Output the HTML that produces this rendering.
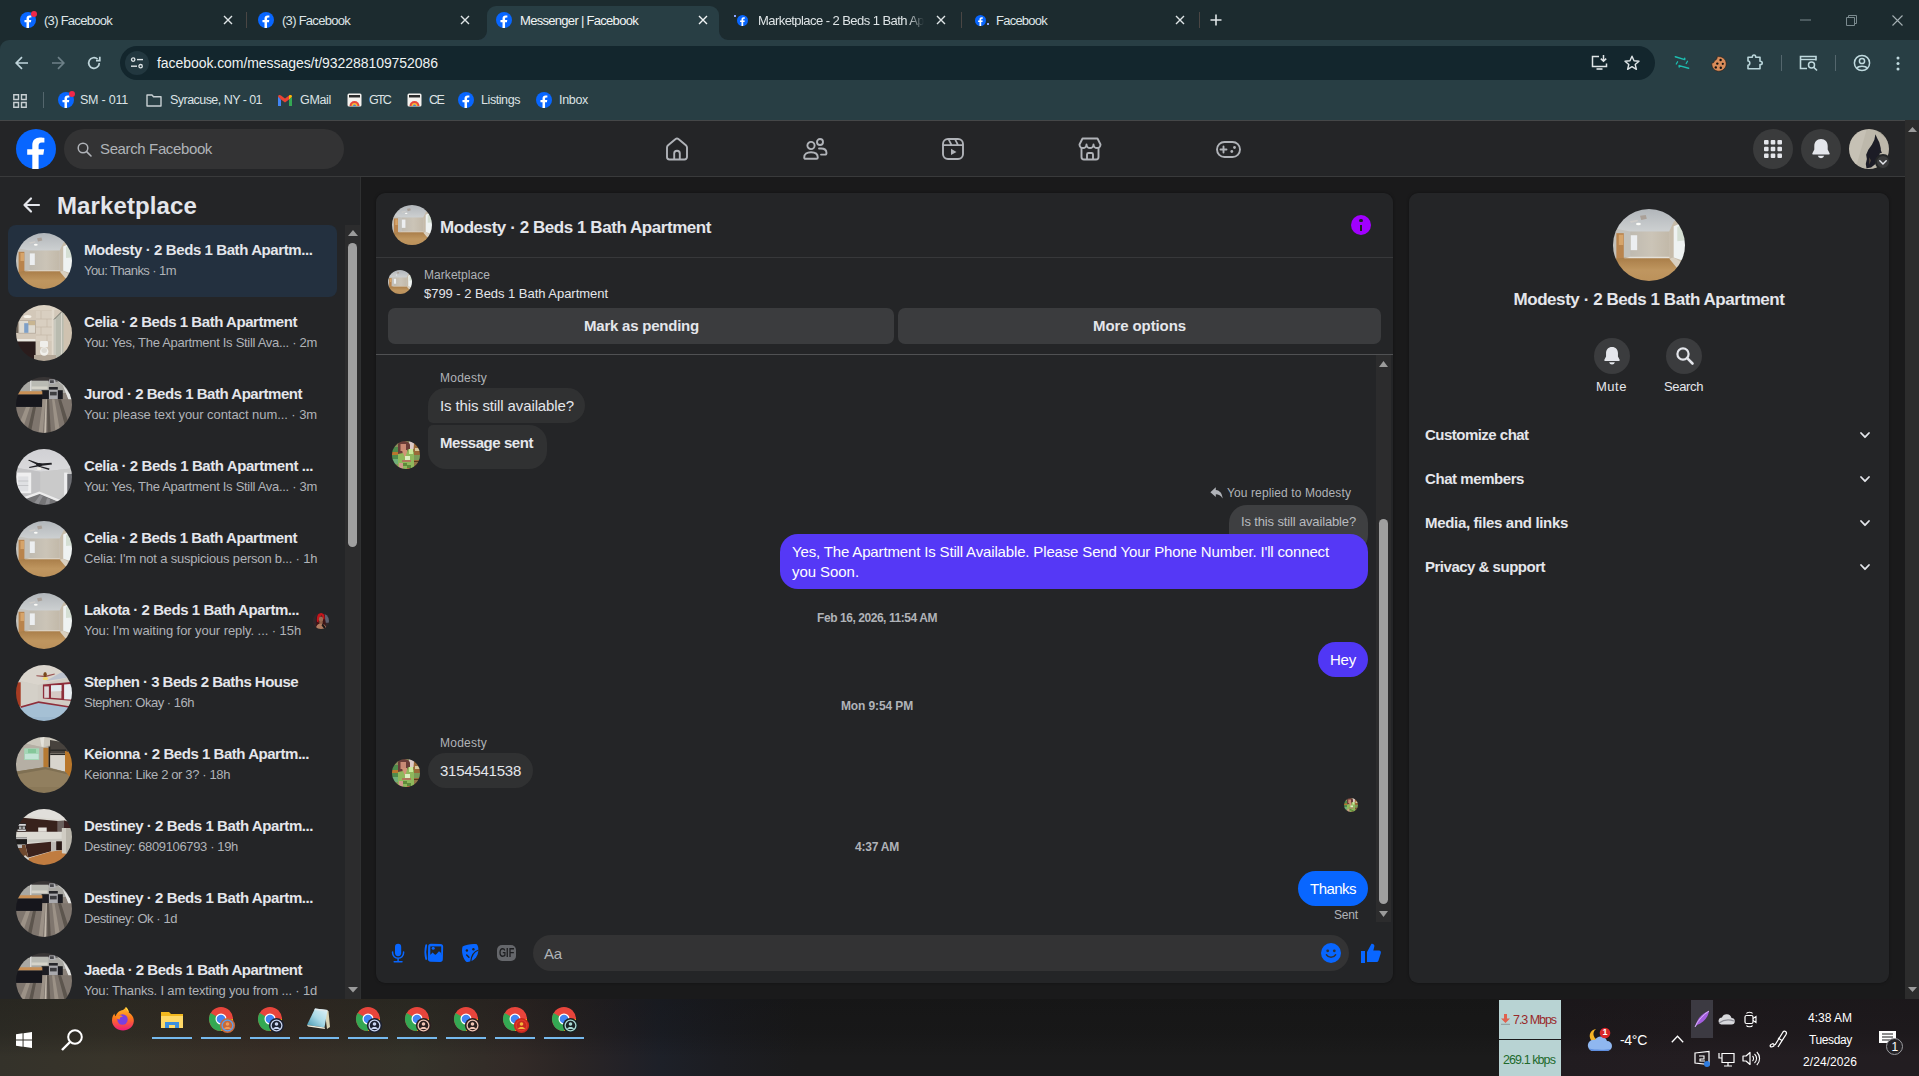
<!DOCTYPE html>
<html lang="en">
<head>
<meta charset="utf-8">
<title>Messenger | Facebook</title>
<style>
*{box-sizing:border-box;margin:0;padding:0}
html,body{width:1919px;height:1076px;overflow:hidden;background:#1a1a1b}
body{position:relative;font-family:"Liberation Sans",sans-serif;color:#e4e6eb;font-size:15px;-webkit-font-smoothing:antialiased}
.a{position:absolute}
.t{position:absolute;white-space:nowrap;line-height:1}
svg{display:block;position:absolute;overflow:visible}
/* ---------- browser chrome ---------- */
#tabstrip{left:0;top:0;width:1919px;height:52px;background:#1c2b2f}
#toolbar{left:0;top:40px;width:1919px;height:80px;background:#283e44;border-radius:9px 0 0 0}
#toolbar-line{left:0;top:120px;width:1919px;height:1px;background:#454748}
.tabtxt{font-size:13px;color:#dfe5e7;top:14px}
.tabx{width:10px;height:10px;top:15px}
.tabsep{width:1px;height:16px;top:12px;background:#4a4644}
#acttab{left:487px;top:6px;width:232px;height:34px;background:#283e44;border-radius:9px 9px 0 0}
#omni{left:120px;top:46px;width:1535px;height:34px;border-radius:17px;background:#13262d}
.bm{font-size:12.5px;color:#dde3e5;top:94px}
.fbfav{border-radius:50%;background:#0866ff}
/* ---------- facebook header ---------- */
#fbhead{left:0;top:121px;width:1905px;height:55px;background:#242527}
#fbhead-line{left:0;top:176px;width:1905px;height:1px;background:#393a3b}
#pgscroll{left:1905px;top:120px;width:14px;height:879px;background:#2c2c2c}
#search{left:64px;top:129px;width:280px;height:40px;border-radius:20px;background:#333334}
.rbtn{width:40px;height:40px;border-radius:50%;background:#3a3b3c;top:129px}
/* ---------- sidebar ---------- */
#side{left:0;top:177px;width:360px;height:822px;background:#242527}
#side-line{left:360px;top:177px;width:1px;height:822px;background:#2f3031}
#sel{left:8px;top:225px;width:329px;height:72px;border-radius:8px;background:#23303f}
#lscroll{left:345px;top:225px;width:15px;height:774px;background:#2c2c2d}
#lthumb{left:348px;top:243px;width:9px;height:304px;border-radius:5px;background:#9f9f9f}
.av{position:absolute;border-radius:50%;overflow:hidden}
.it{font-size:15px;font-weight:700;color:#e4e6eb;left:84px}
.is{font-size:13px;color:#b0b3b8;left:84px}
/* ---------- chat card ---------- */
.card{background:#242527;border-radius:9px;box-shadow:0 0 3px rgba(0,0,0,.35)}
#chat{left:376px;top:193px;width:1017px;height:790px}
#info{left:1409px;top:193px;width:480px;height:790px}
.hl{height:1px;background:#37383a}
.btn{background:#3b3c3e;border-radius:7px;height:36px;top:308px}
.btn .t{font-size:15px;font-weight:700;color:#e4e6eb;top:10px}
.bub{position:absolute;border-radius:18px;background:#303132}
.bt{font-size:15px;color:#e4e6eb}
.lbl{font-size:12px;color:#b0b3b8}
.ts{font-size:12px;font-weight:700;color:#b0b3b8}
#cscroll{left:1376px;top:355px;width:15px;height:567px;background:#2c2c2d}
#cthumb{left:1379px;top:519px;width:9px;height:385px;border-radius:5px;background:#9f9f9f}
.row{font-size:15px;font-weight:700;color:#e4e6eb;left:1425px}
/* ---------- taskbar ---------- */
#task{left:0;top:999px;width:1919px;height:77px;background:
 linear-gradient(180deg,rgba(10,10,10,.28) 0,rgba(10,10,10,.2) 45%,rgba(10,10,10,0) 75%),
 linear-gradient(90deg,#34322a 0px,#38342a 110px,#392f27 270px,#35332a 410px,#322a27 520px,#2c2625 560px,#222127 630px,#1d2028 660px,#1c1d22 720px,#1b1b1c 800px,#1b1b1b 1490px,#211c20 1565px,#231d21 1700px,#221d21 1919px)}
.ul{height:2px;width:40px;top:1037px;background:#76b9ed}
.clk{font-size:12px;color:#fff}
</style>
</head>
<body>
<!-- ======================= BROWSER CHROME ======================= -->
<svg width="0" height="0" style="left:-10px;top:-10px"><defs><symbol id="fbf" viewBox="0 0 40 40"><circle cx="20" cy="20" r="20" fill="#0866ff"/><path d="M22.600 40V25.800H27.300L28.200 20.300H22.600V16.700C22.600 15.100 23.400 13.600 25.800 13.600H28.400V8.900C28.400 8.900 26.100 8.500 23.900 8.500C19.300 8.500 16.300 11.300 16.300 16.100V20.300H11.200V25.800H16.300V40Z" fill="#fff"/></symbol></defs></svg>
<div class="a" id="tabstrip"></div>
<div class="a" id="toolbar"></div>
<div class="a" id="acttab"></div>
<svg style="left:478px;top:31px" width="9" height="9"><path d="M9 0V9H0A9 9 0 0 0 9 0Z" fill="#283d45"/></svg>
<svg style="left:719px;top:31px" width="9" height="9"><path d="M0 0V9H9A9 9 0 0 1 0 0Z" fill="#283d45"/></svg>

<!-- tab 1 -->
<svg style="left:20px;top:12px" width="16" height="16"><use href="#fbf"/></svg>
<div class="a" style="left:31px;top:11px;width:6px;height:6px;border-radius:50%;background:#f02849"></div>
<div class="t tabtxt" style="left:44px"><span style="letter-spacing:-0.716px">(3) Facebook</span></div>
<svg class="tabx" style="left:223px" viewBox="0 0 10 10"><path d="M1 1L9 9M9 1L1 9" stroke="#dfe5e7" stroke-width="1.4"/></svg>
<div class="a tabsep" style="left:246px"></div>
<!-- tab 2 -->
<svg style="left:258px;top:12px" width="16" height="16"><use href="#fbf"/></svg>
<div class="t tabtxt" style="left:282px"><span style="letter-spacing:-0.716px">(3) Facebook</span></div>
<svg class="tabx" style="left:460px" viewBox="0 0 10 10"><path d="M1 1L9 9M9 1L1 9" stroke="#dfe5e7" stroke-width="1.4"/></svg>
<!-- tab 3 active -->
<svg style="left:496px;top:12px" width="16" height="16"><use href="#fbf"/></svg>
<div class="t tabtxt" style="left:520px;color:#f1f4f5"><span style="letter-spacing:-0.700px">Messenger | Facebook</span></div>
<svg class="tabx" style="left:698px" viewBox="0 0 10 10"><path d="M1 1L9 9M9 1L1 9" stroke="#f1f4f5" stroke-width="1.4"/></svg>
<!-- tab 4 -->
<svg style="left:737px;top:15px" width="11" height="11"><use href="#fbf"/></svg>
<div class="a" style="left:734px;top:15px;width:2px;height:2px;background:#8fa7ff"></div>
<div class="t tabtxt" style="left:758px;width:166px;overflow:hidden;-webkit-mask-image:linear-gradient(90deg,#000 150px,transparent 166px)"><span style="letter-spacing:-0.561px">Marketplace - 2 Beds 1 Bath Ap</span></div>
<svg class="tabx" style="left:936px" viewBox="0 0 10 10"><path d="M1 1L9 9M9 1L1 9" stroke="#dfe5e7" stroke-width="1.4"/></svg>
<div class="a tabsep" style="left:961px"></div>
<!-- tab 5 -->
<svg style="left:975px;top:15px" width="11" height="11"><use href="#fbf"/></svg>
<div class="a" style="left:987px;top:23px;width:2px;height:2px;background:#8fa7ff"></div>
<div class="t tabtxt" style="left:996px"><span style="letter-spacing:-0.762px">Facebook</span></div>
<svg class="tabx" style="left:1175px" viewBox="0 0 10 10"><path d="M1 1L9 9M9 1L1 9" stroke="#dfe5e7" stroke-width="1.4"/></svg>
<div class="a tabsep" style="left:1199px"></div>
<svg style="left:1210px;top:14px" width="12" height="12" viewBox="0 0 12 12"><path d="M6 0.5V11.5M0.5 6H11.5" stroke="#dfe5e7" stroke-width="1.6"/></svg>
<!-- window controls -->
<svg style="left:1800px;top:19px" width="11" height="2"><path d="M0 1H11" stroke="#7b8a8f" stroke-width="1"/></svg>
<svg style="left:1846px;top:15px" width="11" height="11" viewBox="0 0 11 11"><path d="M0.5 2.5H8.5V10.5H0.5ZM2.5 2.5V0.5H10.5V8.5H8.5" stroke="#7b8a8f" fill="none" stroke-width="1"/></svg>
<svg style="left:1892px;top:15px" width="11" height="11" viewBox="0 0 11 11"><path d="M0.5 0.5L10.5 10.5M10.5 0.5L0.5 10.5" stroke="#a5b0b4" stroke-width="1.1"/></svg>

<!-- toolbar -->
<svg style="left:15px;top:56px" width="14" height="14" viewBox="0 0 14 14"><path d="M13 7H1.8M7 1.2L1.2 7L7 12.8" stroke="#bfd5db" stroke-width="1.7" fill="none"/></svg>
<svg style="left:51px;top:56px" width="14" height="14" viewBox="0 0 14 14"><path d="M1 7H12.2M7 1.2L12.8 7L7 12.8" stroke="#6d8088" stroke-width="1.7" fill="none"/></svg>
<svg style="left:87px;top:56px" width="14" height="14" viewBox="0 0 14 14"><path d="M12.3 7A5.3 5.3 0 1 1 10.6 3.1" stroke="#bfd5db" stroke-width="1.7" fill="none"/><path d="M12.8 0.8V4.6H9" stroke="#bfd5db" stroke-width="1.7" fill="none"/></svg>
<div class="a" id="omni"></div>
<div class="a" style="left:125px;top:51px;width:24px;height:24px;border-radius:50%;background:#22373f"></div>
<svg style="left:130px;top:57px" width="14" height="12" viewBox="0 0 14 12"><circle cx="3.2" cy="2.6" r="1.7" stroke="#dfe5e7" stroke-width="1.3" fill="none"/><path d="M7 2.6H13" stroke="#dfe5e7" stroke-width="1.4"/><circle cx="10.6" cy="9.2" r="1.7" stroke="#dfe5e7" stroke-width="1.3" fill="none"/><path d="M1 9.2H7" stroke="#dfe5e7" stroke-width="1.4"/></svg>
<div class="t" style="left:157px;top:55.500px;font-size:14px;color:#eef2f3"><span style="letter-spacing:-0.060px">facebook.com/messages/t/932288109752086</span></div>
<!-- omnibox right icons -->
<svg style="left:1591px;top:55px" width="17" height="15" viewBox="0 0 17 15"><path d="M8 1.5H1.5V11.5H15.5V8.5" stroke="#dfe5e7" stroke-width="1.5" fill="none"/><path d="M5.5 14H11.5" stroke="#dfe5e7" stroke-width="1.6"/><path d="M12.5 0V6M9.8 3.6L12.5 6.3L15.2 3.6" stroke="#dfe5e7" stroke-width="1.5" fill="none"/></svg>
<svg style="left:1624px;top:55px" width="16" height="15" viewBox="0 0 16 15"><path d="M8 1.2L10 5.8L15 6.2L11.2 9.5L12.4 14.3L8 11.7L3.6 14.3L4.8 9.5L1 6.2L6 5.8Z" stroke="#dfe5e7" stroke-width="1.4" fill="none" stroke-linejoin="round"/></svg>
<svg style="left:1674px;top:55px" width="16" height="15" viewBox="0 0 16 15"><path d="M1.300 1.800L10.700 4.600V3.300M5.200 12V10.600L14.600 13.200" stroke="#1dbdb0" stroke-width="1.500" fill="none" stroke-linecap="round" stroke-linejoin="round"/><path d="M2.300 9L3.600 6.700M12.200 8.500L13.500 6.200" stroke="#1dbdb0" stroke-width="1.300" stroke-linecap="round"/></svg>
<svg style="left:1710.500px;top:55.500px" width="16" height="16" viewBox="0 0 16 16"><path d="M6.200 0.800C10.500 -0.300 15.200 3 15.200 7.800C15.200 12 11.800 15.200 7.800 15.200C3.500 15.200 0.500 11.800 0.800 7C2.600 7.200 3.600 6 3.300 4.500C5 4.400 6.200 3 6.200 0.800Z" fill="#d98c5a" stroke="#2a1a10" stroke-width=".6"/><circle cx="9.600" cy="4" r="1.200" fill="#111"/><circle cx="6.300" cy="7.600" r="1.200" fill="#111"/><circle cx="11.800" cy="7.800" r="1.100" fill="#111"/><circle cx="4.800" cy="11.400" r="1.200" fill="#111"/><circle cx="9.800" cy="11.800" r="1.200" fill="#111"/></svg>
<svg style="left:1746px;top:53px" width="18" height="18" viewBox="0 0 18 18"><path d="M2 4.300H6.300C6.300 1.300 9.700 1.300 9.700 4.300H14V8.200C17 8.200 17 11.600 14 11.600V15.700H2V12.200C4.400 12.200 4.400 8 2 8Z" stroke="#b9d5da" stroke-width="1.600" fill="none" stroke-linejoin="round"/></svg>
<div class="a" style="left:1781px;top:55px;width:1px;height:16px;background:#54666d"></div>
<svg style="left:1799px;top:55px" width="19" height="16" viewBox="0 0 19 16"><path d="M17 5.5V1.5H1.5V13.500H8" stroke="#bfd9de" stroke-width="1.6" fill="none"/><path d="M1.5 4.5H17" stroke="#bfd9de" stroke-width="1.4"/><circle cx="12.5" cy="10" r="3" stroke="#bfd9de" stroke-width="1.5" fill="none"/><path d="M14.7 12.2L18 15.500" stroke="#bfd9de" stroke-width="1.6"/></svg>
<div class="a" style="left:1835px;top:55px;width:1px;height:16px;background:#54666d"></div>
<svg style="left:1853px;top:54px" width="18" height="18" viewBox="0 0 18 18"><circle cx="9" cy="9" r="7.6" stroke="#bfd9de" stroke-width="1.5" fill="none"/><circle cx="9" cy="7" r="2.6" stroke="#bfd9de" stroke-width="1.5" fill="none"/><path d="M3.8 14.2C5.5 11.500 12.500 11.500 14.200 14.200" stroke="#bfd9de" stroke-width="1.5" fill="none"/></svg>
<svg style="left:1896px;top:56px" width="4" height="15" viewBox="0 0 4 15"><circle cx="2" cy="2" r="1.5" fill="#bfd9de"/><circle cx="2" cy="7.500" r="1.5" fill="#bfd9de"/><circle cx="2" cy="13" r="1.5" fill="#bfd9de"/></svg>

<!-- bookmarks -->
<svg style="left:13px;top:94px" width="14" height="14" viewBox="0 0 14 14"><path d="M0.800 0.800H5.500V5.500H0.800ZM8.500 0.800H13.200V5.500H8.500ZM0.800 8.500H5.500V13.200H0.800ZM8.500 8.500H13.200V13.200H8.500Z" stroke="#c8d0d3" stroke-width="1.4" fill="none"/></svg>
<div class="a" style="left:43px;top:92px;width:1px;height:16px;background:#54666d"></div>
<svg style="left:58px;top:92px" width="16" height="16"><use href="#fbf"/></svg>
<div class="a" style="left:69px;top:91px;width:6px;height:6px;border-radius:50%;background:#f02849"></div>
<div class="t bm" style="left:80px"><span style="letter-spacing:-0.225px">SM - 011</span></div>
<svg style="left:146px;top:94px" width="16" height="13" viewBox="0 0 16 13"><path d="M1 1H6L7.500 2.800H15V12H1Z" stroke="#c8d0d3" stroke-width="1.4" fill="none" stroke-linejoin="round"/></svg>
<div class="t bm" style="left:170px"><span style="letter-spacing:-0.541px">Syracuse, NY - 01</span></div>
<svg style="left:278px;top:95px" width="14" height="11" viewBox="0 0 14 11"><path d="M0 1.500V11H3V4.500Z" fill="#4285f4"/><path d="M14 1.500V11H11V4.500Z" fill="#34a853"/><path d="M0 1.500C0 0 1.800 -0.500 3 0.500L7 3.600L11 0.500C12.200 -0.500 14 0 14 1.500L11 4.500L7 7.500L3 4.500Z" fill="#ea4335"/><path d="M11 0.500C12.200 -0.500 14 0 14 1.500L11 4.500Z" fill="#fbbc04"/></svg>
<div class="t bm" style="left:300px"><span style="letter-spacing:-0.331px">GMail</span></div>
<svg style="left:347px;top:93px" width="15" height="14" viewBox="0 0 15 14"><rect x="0.500" y="0.500" width="14" height="13" rx="1.500" fill="#f3f1ee"/><path d="M2 2H13V4.500H2Z" fill="#2a2a2a"/><path d="M2.500 13A5 5 0 0 1 12.500 13Z" fill="#e8453c"/><path d="M4.500 13A3 3 0 0 1 10.500 13Z" fill="#f6b83c"/><path d="M6 13A1.500 1.500 0 0 1 9 13Z" fill="#3f7fe0"/></svg>
<div class="t bm" style="left:369px"><span style="letter-spacing:-1.797px">GTC</span></div>
<svg style="left:407px;top:93px" width="15" height="14" viewBox="0 0 15 14"><rect x="0.500" y="0.500" width="14" height="13" rx="1.500" fill="#f3f1ee"/><path d="M2 2H13V4.500H2Z" fill="#2a2a2a"/><path d="M2.500 13A5 5 0 0 1 12.500 13Z" fill="#e8453c"/><path d="M4.500 13A3 3 0 0 1 10.500 13Z" fill="#f6b83c"/><path d="M6 13A1.500 1.500 0 0 1 9 13Z" fill="#3f7fe0"/></svg>
<div class="t bm" style="left:429px"><span style="letter-spacing:-1.438px">CE</span></div>
<svg style="left:458px;top:92px" width="16" height="16"><use href="#fbf"/></svg>
<div class="t bm" style="left:481px"><span style="letter-spacing:-0.424px">Listings</span></div>
<svg style="left:536px;top:92px" width="16" height="16"><use href="#fbf"/></svg>
<div class="t bm" style="left:559px"><span style="letter-spacing:-0.319px">Inbox</span></div>
<div class="a" id="toolbar-line"></div>
<!-- ======================= SVG SYMBOLS (photos) ======================= -->
<svg width="0" height="0" style="left:-10px;top:-10px">
<defs>
<clipPath id="cc"><circle cx="28" cy="28" r="28"/></clipPath>
<linearGradient id="gceil" x1="0" y1="0" x2="0" y2="1"><stop offset="0" stop-color="#abb0b5"/><stop offset="1" stop-color="#cdd0d1"/></linearGradient>
<linearGradient id="gwall" x1="0" y1="0" x2="1" y2="0"><stop offset="0" stop-color="#bfbab0"/><stop offset=".55" stop-color="#cbc4b7"/><stop offset="1" stop-color="#c2b9a9"/></linearGradient>
<linearGradient id="gfloor" x1="0" y1="0" x2="0" y2="1"><stop offset="0" stop-color="#a87c48"/><stop offset=".45" stop-color="#bf965f"/><stop offset="1" stop-color="#ba8f59"/></linearGradient>
<linearGradient id="gceil2" x1="0" y1="0" x2="0" y2="1"><stop offset="0" stop-color="#cfcfd3"/><stop offset="1" stop-color="#dadadc"/></linearGradient>
<filter id="bl2"><feGaussianBlur stdDeviation="2"/></filter>
<filter id="bl"><feGaussianBlur stdDeviation="0.55"/></filter>
<symbol id="room" viewBox="0 0 56 56"><g clip-path="url(#cc)"><g filter="url(#bl)">
 <rect x="-4" y="-4" width="64" height="64" fill="#c9ccce"/>
 <path d="M-4 -4H60V10L47.500 9.400L43.700 17.500H13.300L-4 15Z" fill="url(#gceil)"/>
 <path d="M-4 14L13.300 17.500V37.500L-4 40Z" fill="#c3c1bb"/>
 <rect x="13.300" y="17.500" width="30.400" height="20.500" fill="url(#gwall)"/>
 <path d="M43.700 17.500L47.500 9.400L60 4V52L43.700 38.500Z" fill="#c6bba9"/>
 <path d="M47.200 13.500L60 8V42L47.200 37.800Z" fill="#eef2f1"/>
 <path d="M50 14L60 10V24L50 25Z" fill="#d5dfd3"/>
 <path d="M2.600 18.800H8.400V38.800H2.600Z" fill="#b9844d"/>
 <path d="M4.500 20H8V28H4.500Z" fill="#d6a46a"/>
 <rect x="13.800" y="20.400" width="5" height="11.600" fill="#eceef0"/>
 <path d="M-4 40L2.300 38.500L13.300 37.500H43.700L60 52V60H-4Z" fill="url(#gfloor)"/>
 <path d="M8.400 38.300L13.300 37.200H43.700L44.500 38.300H13.300Z" fill="#e4e0d8"/>
 <path d="M43.700 38.500L49.500 45.600L56 43L47.200 37.800Z" fill="#d9d0c0"/>
 <path d="M21 5.200L25.500 4.600L26.300 7.500L22 8.600Z" fill="#aaa098"/>
 <path d="M13 9.500L19 8.300L19.500 9.500L14 10.800Z" fill="#cfcdca"/>
 <ellipse cx="19.800" cy="11.700" rx="1.900" ry="1" fill="#fbfbf8"/>
</g></g></symbol>
<symbol id="bath" viewBox="0 0 56 56"><g clip-path="url(#cc)"><g filter="url(#bl)">
 <rect x="-4" y="-4" width="64" height="64" fill="#d3c8b9"/>
 <rect x="-4" y="-4" width="64" height="9" fill="#dcd2c3"/>
 <rect x="20" y="6" width="16" height="30" fill="#d9cfc1"/>
 <path d="M20 14H36M20 22H36M20 30H36M25 6V14M31 14V22M25 22V30M31 30V38" stroke="#c3b7a6" stroke-width=".6"/>
 <ellipse cx="11.500" cy="11.500" rx="4" ry="1.600" fill="#f7f3ea"/>
 <rect x="2.300" y="15.200" width="17.500" height="13.400" fill="#b5ab9d"/>
 <rect x="3.200" y="16" width="15.800" height="11.800" fill="#dedad1"/>
 <rect x="12" y="16" width="7" height="4.200" fill="#c8b591"/>
 <rect x="8.200" y="18.200" width="4.200" height="9.600" fill="#7d9fc7"/>
 <rect x="0" y="16" width="2.300" height="12" fill="#6d6359"/>
 <rect x="35.800" y="3" width="2.400" height="50" fill="#e1d9cc"/>
 <path d="M37.700 14L45 6.800H47.800V52H37.700Z" fill="#b9bbaf"/>
 <path d="M45.500 7V52M39 14V52" stroke="#dcd9cf" stroke-width=".9" fill="none"/>
 <path d="M38 14.500L45.500 7" stroke="#5d5a52" stroke-width=".7" fill="none"/>
 <rect x="47.800" y="4" width="10" height="50" fill="#cfc2b0"/>
 <rect x="-2" y="34" width="21.400" height="2.400" fill="#ece8e1"/>
 <path d="M-2 36.400H19.600V53L12 58H-2Z" fill="#2a1f1f"/>
 <path d="M18 50H40V60H18Z" fill="#b3a798"/>
 <rect x="24" y="36" width="8" height="6.300" rx="1" fill="#efeeea"/>
 <ellipse cx="28.200" cy="46.500" rx="4.200" ry="4.300" fill="#f1f0ec"/>
 <ellipse cx="28.200" cy="45.500" rx="2.800" ry="2.400" fill="#dddad3"/>
</g></g></symbol>
<symbol id="kit" viewBox="0 0 56 56"><g clip-path="url(#cc)"><g filter="url(#bl)">
 <rect x="-4" y="-4" width="64" height="64" fill="#8b827a"/>
 <rect x="-4" y="-4" width="64" height="20" fill="#a9a8a3"/>
 <path d="M12 -4H44V4.500H12Z" fill="#373435"/>
 <rect x="14.900" y="3.700" width="17.700" height="9" fill="#b9bab3"/>
 <rect x="15.500" y="9.500" width="16" height="2.600" fill="#d5d3c9"/>
 <rect x="14" y="2" width="1.400" height="12" fill="#d9d9d7"/>
 <rect x="33.200" y="2.400" width="6.300" height="4.400" fill="#b4b4b8"/>
 <rect x="34" y="3.200" width="3.800" height="2.800" fill="#4a4a4e"/>
 <path d="M40 3L47.100 8.700L56 31.500V3Z" fill="#c9c9c6"/>
 <path d="M47.100 8.700L52 21L56 31.500L56 20Z" fill="#e4e4e2"/>
 <rect x="25.600" y="13.200" width="21.200" height="9.100" fill="#1c1d20"/>
 <rect x="32.900" y="10" width="8.900" height="12.300" fill="#a9a9ad"/>
 <rect x="32.900" y="10" width="8.900" height="2.600" fill="#26262a"/>
 <rect x="34" y="14.800" width="6.700" height="3.600" fill="#3c3c40"/>
 <path d="M-4 22.300H60V60H-4Z" fill="#7f766e"/>
 <path d="M27 22.300L22 60H26.500L29.500 22.300ZM36 22.300L40 60H45L38.500 22.300ZM10 30L-2 60H4L14 30Z" fill="#9c9287"/>
 <path d="M31 22.300L31.500 60H35L33 22.300ZM42 22.300L52 60H57L45 22.300ZM17 30L10 60H14L20 30Z" fill="#5c544e"/>
 <path d="M29.700 22.300L28 60H30L30.800 22.300Z" fill="#c1b8ab"/>
 <path d="M2.200 14.300H26.300V17.500H1.500Z" fill="#c98f55"/>
 <path d="M-4 17.500H26V29.900H-4Z" fill="#15161a"/>
</g></g></symbol>
<symbol id="grey" viewBox="0 0 56 56"><g clip-path="url(#cc)"><g filter="url(#bl)">
 <rect x="-4" y="-4" width="64" height="64" fill="#c6c6c8"/>
 <path d="M-4 -4H60V19.500L54.700 19.500L24.400 22.700L0.300 18.900L-4 18Z" fill="url(#gceil2)"/>
 <path d="M-4 18L24.400 22.700V44L-4 52Z" fill="#c2c2c4"/>
 <path d="M24.400 22.700L60 19V54L24.400 44Z" fill="#cacaca"/>
 <rect x="1" y="23.600" width="14.200" height="20.600" fill="#efeff0"/>
 <rect x="2.200" y="27.400" width="10.100" height="14.900" fill="#dfe0e3"/>
 <path d="M2.200 32H12.300M2.200 36.500H12.300" stroke="#c4c5c8" stroke-width="1"/>
 <rect x="48.100" y="23.600" width="3.400" height="25" fill="#ededee"/>
 <rect x="51.300" y="25" width="6" height="24" fill="#6d6e73"/>
 <path d="M6 50.500L23.700 44.200L42 52.500L40 60H4Z" fill="#747477"/>
 <path d="M14 60L24 46L27 47L20 60ZM28 60L31 49L34 50L33 60Z" fill="#8f8f92"/>
 <path d="M4.500 49.200L23.400 42.600L44 50.800L43 53L23.600 45L5.500 51.500Z" fill="#ececec"/>
 <path d="M12 11.300L13 10.700L23.500 14.500L35.500 13.800L36 15.500L24 17L33.500 19.500L33 21L22 17.500L13.500 19L13 18L21.500 16Z" fill="#222225"/>
 <ellipse cx="23.100" cy="15.600" rx="3" ry="1.600" fill="#1e1e21"/>
 <ellipse cx="23.100" cy="19.800" rx="2.200" ry="1.200" fill="#f4f1e6"/>
</g></g></symbol>
<symbol id="blue" viewBox="0 0 56 56"><g clip-path="url(#cc)"><g filter="url(#bl)">
 <rect x="-4" y="-4" width="64" height="64" fill="#d1ccc4"/>
 <path d="M-4 -4H60V12L52.800 12.500L21.800 20.100L2.800 15.700L-4 15Z" fill="#dad5cd"/>
 <path d="M30 16L52.800 12.500L60 12V4L44 8Z" fill="#bcc2cd"/>
 <path d="M2.800 15.700L21.800 20.100V37L2.800 43Z" fill="#d4d0c8"/>
 <rect x="-2" y="17.300" width="6.700" height="24.300" fill="#a63a20"/>
 <path d="M26.900 19.500L60 16.500V36.200L26.900 33.400Z" fill="#8e2f3a"/>
 <rect x="28.200" y="21.400" width="4.700" height="11.400" fill="#dcd6d7"/>
 <path d="M35 20.600L45.400 20V33.400L35 32.800Z" fill="#d6cac5"/>
 <path d="M35 20.600L45.400 20V26L35 26.500Z" fill="#e3ecef"/>
 <path d="M48.100 19.400L60 18.500V35L48.100 34.200Z" fill="#e8edf1"/>
 <path d="M-4 46L4.700 42.600L22.500 37.600L53.500 42.600L60 44V60H-4Z" fill="#a5c0d4"/>
 <path d="M-4 52H60V60H-4Z" fill="#9db9cf"/>
 <path d="M4.700 41.300L22.500 36.300L53.500 41.300L58 42.200V43.600L53.500 42.800L22.500 37.900L4.700 43Z" fill="#8e2f3a"/>
 <path d="M20.300 10.200L29 10.800L38.600 8.600L38.800 9.600L29.200 12.200L20.500 11.300Z" fill="#9a5452"/>
 <ellipse cx="29.100" cy="9.600" rx="1.700" ry="2.600" fill="#7a4a1e"/>
 <ellipse cx="29.400" cy="13.500" rx="2.800" ry="1.600" fill="#f2da6c"/>
</g></g></symbol>
<symbol id="carpet" viewBox="0 0 56 56"><g clip-path="url(#cc)"><g filter="url(#bl)">
 <rect x="-4" y="-4" width="64" height="64" fill="#b6b0a5"/>
 <path d="M-4 -4H60V4L42 4.900L27.500 10.600L10.400 6.800L-4 8Z" fill="#ccc8bd"/>
 <path d="M23.500 -2H28.500L27.500 10L25.500 9.500Z" fill="#e4e2da"/>
 <path d="M-4 8L10.400 6.800L27.500 10.600V31L-4 35.500Z" fill="#b5afa4"/>
 <rect x="8.200" y="11.300" width="14.900" height="11.700" fill="#a4d6b6"/>
 <path d="M9 17H22.500V22H9Z" fill="#c3e4d6"/>
 <path d="M12 12H20V16H12Z" fill="#84c79a"/>
 <path d="M34 3L52 6V16H34Z" fill="#46423c"/>
 <rect x="27.400" y="10.800" width="5.300" height="19.600" fill="#b67a33"/>
 <rect x="32.600" y="9.500" width="1.700" height="21" fill="#26221f"/>
 <path d="M34.300 18.200H50V35L34.300 30.500Z" fill="#d8d5cd"/>
 <path d="M34.300 12.500H50V14H34.300ZM34.300 16.500H50V18H34.300Z" fill="#2c2925"/>
 <path d="M49 13.800L60 18V46L49 38.500Z" fill="#b9772c"/>
 <path d="M-4 35.500L0.300 34.400L29.400 29.900L49 34.700L60 46V60H-4Z" fill="#917f5f"/>
 <path d="M-4 35.500L0.300 34.400L29.400 29.900L49 34.700L52 37.500L29.400 32.200L-4 38.500Z" fill="#7f6f53"/>
 <path d="M-4 50H60V60H-4Z" fill="#8a7859"/>
</g></g></symbol>
<symbol id="dark" viewBox="0 0 56 56"><g clip-path="url(#cc)"><g filter="url(#bl)">
 <rect x="-4" y="-4" width="64" height="64" fill="#dcdad3"/>
 <path d="M-4 -4H60V12L49.700 11.300L9.800 6.800L-4 9Z" fill="#e1dfdb"/>
 <path d="M-2 12L6.600 8.700L41.800 12V22.700H-2Z" fill="#38221f"/>
 <rect x="22.200" y="18.500" width="8.500" height="4.300" fill="#e3e0da"/>
 <rect x="1" y="14.100" width="9.100" height="8.200" fill="#2c2826"/>
 <path d="M1.500 15H9.800V16.800H1.500ZM1.500 20.500H9.800V22H1.500Z" fill="#d8d9db"/>
 <path d="M3 17.500H5.500V20H3ZM6.500 17.500H9V20H6.500Z" fill="#a9abad"/>
 <path d="M41.800 12L48 11.500V22.700H41.800Z" fill="#6b5f5c"/>
 <path d="M48 11.300L56 14V20H48Z" fill="#3a2320"/>
 <path d="M45.900 18.900H60V46L45.900 44.200Z" fill="#b9b5ab"/>
 <path d="M45.900 18.900H50V44.500L45.900 44.200Z" fill="#d0ccc3"/>
 <rect x="-2" y="28.500" width="13" height="7" fill="#1f1c1c"/>
 <rect x="0" y="28.500" width="11" height="1.600" fill="#b9b9b9"/>
 <path d="M11 30.600L45.900 29.800V32.300L11 33.600Z" fill="#c9c8c1"/>
 <path d="M9.200 35.300L35.100 32.800V42.300L12.300 48.600Z" fill="#3b231f"/>
 <rect x="35.100" y="33.100" width="5.100" height="9" fill="#bdbab4"/>
 <rect x="40.200" y="32.300" width="5.700" height="9" fill="#2a1a18"/>
 <path d="M-2 36H9.200L12.300 48.600L8 52H-2Z" fill="#6f4a2e"/>
 <path d="M-2 36H6V39H-2Z" fill="#b9b9bb"/>
 <path d="M12.300 49.200L35.100 42.600L45.900 41.300V44.200L60 46V60H4Z" fill="#c07c40"/>
 <path d="M9 46L13 49.500L10 56L5 52Z" fill="#d9d6cf"/>
</g></g></symbol>
<symbol id="person" viewBox="0 0 56 56"><g clip-path="url(#cc)"><g filter="url(#bl)">
 <rect x="-4" y="-4" width="64" height="64" fill="#8a8f5c"/>
 <path d="M-4 12H14V46H-4Z" fill="#4f8a4c"/>
 <path d="M0 22H12V28H0Z" fill="#b9772e"/>
 <path d="M-2 36H14V46H-2Z" fill="#6fae78"/>
 <path d="M34 -4H48V16H34Z" fill="#dccbc6"/>
 <path d="M44 4H60V60H40Z" fill="#9a6a38"/>
 <path d="M46 14H56V20H46Z" fill="#d9c79a"/>
 <path d="M44 28H58V38H44Z" fill="#7a9a58"/>
 <path d="M42 40H56V56H42Z" fill="#5a3a1e"/>
 <path d="M44 42H54V54H44Z" fill="#b89a62" opacity=".6"/>
 <path d="M12 6C14 -2 34 -2 36 8V26H12Z" fill="#6a3d37"/>
 <path d="M17 6H28V20H17Z" fill="#c98a74"/>
 <path d="M20 18H30V34L24 36Z" fill="#d09478"/>
 <path d="M12 26L22 24L26 34L32 16L44 22V60H12Z" fill="#8fb85c"/>
 <path d="M26 30H36V38H26Z" fill="#dcefc0"/>
 <path d="M34 16H42V26H34Z" fill="#c9e89a"/>
 <path d="M20 38H38V42H20Z" fill="#b0785c"/>
 <path d="M14 44H22V58H14Z" fill="#d09a8a"/>
 <path d="M22 44H30V50H22ZM30 48H38V56H30Z" fill="#5f8a3a"/>
 <path d="M30 54H36V60H30Z" fill="#c9784a"/>
</g></g></symbol>
<symbol id="dog" viewBox="0 0 56 56"><g clip-path="url(#cc)"><g filter="url(#bl)">
 <rect x="-4" y="-4" width="64" height="64" fill="#bdb8ab"/>
 <path d="M-4 -4H26L8 60H-4Z" fill="#c6c1b5"/>
 <path d="M30 -4H60V20Z" fill="#b2ad9f"/>
 <path d="M37 7.500L39.500 13L42.500 19L44.500 27L43 35L41 42L37 49L31 54L24.500 55L23.500 49L25 42L24 36L27 29L32 22L35.500 15Z" fill="#1d1f27"/>
 <path d="M43.500 27L46 33.500L43 34Z" fill="#1d1f27"/>
 <path d="M28 40L31 44L28 50Z" fill="#4a4038"/>
</g></g></symbol>
<symbol id="red" viewBox="0 0 56 56"><g clip-path="url(#cc)"><g filter="url(#bl2)">
 <rect x="-4" y="-4" width="64" height="64" fill="#33262a"/>
 <path d="M40 4H60V34H44Z" fill="#5f6070"/>
 <path d="M12 34C10 14 16 0 28 0S44 10 42 22C44 34 46 44 40 50H14C8 46 12 40 12 34Z" fill="#3f1216"/>
 <path d="M14 30C12 12 18 0 28 0S42 8 40 22C36 26 34 14 30 8C24 12 20 22 19 34Z" fill="#c4141c"/>
 <ellipse cx="28" cy="22" rx="7.500" ry="10" fill="#9b6a52"/>
 <path d="M22 30H34V40H22Z" fill="#8c5e48"/>
 <path d="M10 56C10 42 20 36 28 38C36 36 48 44 46 56Z" fill="#b07c60"/>
 <path d="M34 36L44 50L40 56L30 44Z" fill="#1c1414"/>
</g></g></symbol>
</defs>
</svg>

<!-- ======================= FACEBOOK HEADER ======================= -->
<div class="a" id="fbhead"></div>
<div class="a" id="fbhead-line"></div>
<div class="a" id="pgscroll"></div>
<svg style="left:1908px;top:127px" width="9" height="5"><path d="M4.500 0L9 5H0Z" fill="#9b9b9b"/></svg>
<svg style="left:1908px;top:987px" width="9" height="5"><path d="M0 0H9L4.500 5Z" fill="#9b9b9b"/></svg>
<!-- logo -->
<div class="a" style="left:16px;top:129px;width:40px;height:40px;border-radius:50%;background:#0866ff"></div>
<svg style="left:16px;top:129px" width="40" height="40" viewBox="0 0 40 40"><path d="M22.600 40V25.800H27.300L28.200 20.300H22.600V16.700C22.600 15.100 23.400 13.600 25.800 13.600H28.400V8.900C28.400 8.900 26.100 8.500 23.900 8.500C19.300 8.500 16.300 11.300 16.300 16.100V20.300H11.200V25.800H16.300V40Z" fill="#fff"/></svg>
<!-- search -->
<div class="a" id="search"></div>
<svg style="left:77px;top:142px" width="15" height="15" viewBox="0 0 15 15"><circle cx="6" cy="6" r="4.800" stroke="#b0b3b8" stroke-width="1.500" fill="none"/><path d="M9.600 9.600L14 14" stroke="#b0b3b8" stroke-width="1.600" stroke-linecap="round"/></svg>
<div class="t" style="left:100px;top:141px;font-size:15px;color:#b0b3b8"><span style="letter-spacing:-0.372px">Search Facebook</span></div>
<!-- nav icons -->
<svg style="left:666px;top:137px" width="22" height="24" viewBox="0 0 22 24"><path d="M1 10.500C1 9.600 1.400 8.800 2.100 8.200L9.600 2C10.400 1.300 11.600 1.300 12.400 2L19.900 8.200C20.600 8.800 21 9.600 21 10.500V20A2.500 2.500 0 0 1 18.500 22.500H3.500A2.500 2.500 0 0 1 1 20Z" stroke="#b0b3b8" stroke-width="1.900" fill="none"/><path d="M8.200 22V16.500A2.800 2.800 0 0 1 13.800 16.500V22" stroke="#b0b3b8" stroke-width="1.900" fill="none"/></svg>
<svg style="left:803px;top:137px" width="25" height="23" viewBox="0 0 25 23"><circle cx="8" cy="8.500" r="3.600" stroke="#b0b3b8" stroke-width="1.900" fill="none"/><path d="M1.200 20.500C1.200 17 3.800 15.200 8 15.200S14.800 17 14.800 20.500C14.800 21.300 14.200 21.800 13.500 21.800H2.500C1.800 21.800 1.200 21.300 1.200 20.500Z" stroke="#b0b3b8" stroke-width="1.900" fill="none"/><circle cx="17" cy="5" r="3" stroke="#b0b3b8" stroke-width="1.900" fill="none"/><path d="M16 11.500H18C21.200 11.500 23.500 13.200 23.500 16C23.500 17 22.800 17.600 22 17.600H18" stroke="#b0b3b8" stroke-width="1.900" fill="none" stroke-linecap="round"/></svg>
<svg style="left:942px;top:138px" width="22" height="22" viewBox="0 0 22 22"><rect x="1" y="1" width="20" height="20" rx="5" stroke="#b0b3b8" stroke-width="1.900" fill="none"/><path d="M1 7.200H21M6.500 1.200L9.500 7M13 1.200L16 7" stroke="#b0b3b8" stroke-width="1.700" fill="none"/><path d="M9 10.800V17L14.500 13.900Z" fill="#b0b3b8"/></svg>
<svg style="left:1078px;top:137px" width="24" height="24" viewBox="0 0 24 24"><path d="M3.500 11V20A2.500 2.500 0 0 0 6 22.500H18A2.500 2.500 0 0 0 20.500 20V11" stroke="#b0b3b8" stroke-width="1.900" fill="none"/><path d="M4.500 1.500H19.500L22.500 7.500C22.500 9.500 21 11 19 11S15.500 9.500 15.500 7.500C15.500 9.500 14 11 12 11S8.500 9.500 8.500 7.500C8.500 9.500 7 11 5 11S1.500 9.500 1.500 7.500Z" stroke="#b0b3b8" stroke-width="1.900" fill="none" stroke-linejoin="round"/><path d="M9 22V17.500A1.500 1.500 0 0 1 10.500 16H13.500A1.500 1.500 0 0 1 15 17.500V22" stroke="#b0b3b8" stroke-width="1.900" fill="none"/></svg>
<svg style="left:1216px;top:141px" width="25" height="17" viewBox="0 0 25 17"><rect x="1" y="1" width="23" height="15" rx="7.500" stroke="#b0b3b8" stroke-width="1.900" fill="none"/><path d="M7.500 5.500V11.500M4.500 8.500H10.500" stroke="#b0b3b8" stroke-width="1.900" stroke-linecap="round"/><circle cx="18.500" cy="6.500" r="1.400" fill="#b0b3b8"/><circle cx="15.800" cy="10.500" r="1.400" fill="#b0b3b8"/></svg>
<!-- right buttons -->
<div class="a rbtn" style="left:1753px"></div>
<svg style="left:1764px;top:140px" width="18" height="18" viewBox="0 0 18 18"><g fill="#e4e6eb"><rect x="0" y="0" width="4.600" height="4.600" rx="1"/><rect x="6.700" y="0" width="4.600" height="4.600" rx="1"/><rect x="13.400" y="0" width="4.600" height="4.600" rx="1"/><rect x="0" y="6.700" width="4.600" height="4.600" rx="1"/><rect x="6.700" y="6.700" width="4.600" height="4.600" rx="1"/><rect x="13.400" y="6.700" width="4.600" height="4.600" rx="1"/><rect x="0" y="13.400" width="4.600" height="4.600" rx="1"/><rect x="6.700" y="13.400" width="4.600" height="4.600" rx="1"/><rect x="13.400" y="13.400" width="4.600" height="4.600" rx="1"/></g></svg>
<div class="a rbtn" style="left:1801px"></div>
<svg style="left:1812px;top:139px" width="18" height="20" viewBox="0 0 18 20"><path d="M9 0C4.800 0 2.300 3 2.300 7V10.500L0.400 14.200C0.100 14.900 0.600 15.600 1.300 15.600H16.700C17.400 15.600 17.900 14.900 17.600 14.200L15.700 10.500V7C15.700 3 13.200 0 9 0Z" fill="#e4e6eb"/><path d="M5.800 16.800A3.300 3.300 0 0 0 12.200 16.800Z" fill="#e4e6eb"/></svg>
<svg style="left:1849px;top:129px" width="40" height="40"><use href="#dog"/></svg>
<div class="a" style="left:1875px;top:154px;width:16px;height:16px;border-radius:50%;background:#3a3b3c;border:2px solid #252728"></div>
<svg style="left:1879px;top:160px" width="8" height="5" viewBox="0 0 8 5"><path d="M0.800 0.800L4 4L7.200 0.800" stroke="#e4e6eb" stroke-width="1.500" fill="none" stroke-linecap="round"/></svg>

<!-- ======================= SIDEBAR ======================= -->
<div class="a" id="side"></div>
<div class="a" id="side-line"></div>
<svg style="left:23px;top:197px" width="17" height="16" viewBox="0 0 17 16"><path d="M16 8H2M8 1.500L1.500 8L8 14.500" stroke="#e4e6eb" stroke-width="2.200" fill="none" stroke-linecap="round" stroke-linejoin="round"/></svg>
<div class="t" style="left:57px;top:194px;font-size:24px;font-weight:700;color:#e4e6eb"><span style="letter-spacing:0.114px">Marketplace</span></div>
<div class="a" id="sel"></div>
<div class="a" id="lscroll"></div>
<svg style="left:347.500px;top:230px" width="10" height="6"><path d="M5 0L10 6H0Z" fill="#9b9b9b"/></svg>
<svg style="left:347.500px;top:987px" width="10" height="5.500"><path d="M0 0H10L5 5.500Z" fill="#9b9b9b"/></svg>
<div class="a" id="lthumb"></div>

<svg style="left:16px;top:233px" width="56" height="56"><use href="#room"/></svg>
<div class="t it" style="top:242px"><span style="letter-spacing:-0.409px">Modesty · 2 Beds 1 Bath Apartm...</span></div>
<div class="t is" style="top:264px"><span style="letter-spacing:-0.573px">You: Thanks · 1m</span></div>

<svg style="left:16px;top:305px" width="56" height="56"><use href="#bath"/></svg>
<div class="t it" style="top:314px"><span style="letter-spacing:-0.452px">Celia · 2 Beds 1 Bath Apartment</span></div>
<div class="t is" style="top:336px"><span style="letter-spacing:-0.300px">You: Yes, The Apartment Is Still Ava... · 2m</span></div>

<svg style="left:16px;top:377px" width="56" height="56"><use href="#kit"/></svg>
<div class="t it" style="top:386px"><span style="letter-spacing:-0.478px">Jurod · 2 Beds 1 Bath Apartment</span></div>
<div class="t is" style="top:408px"><span style="letter-spacing:-0.067px">You: please text your contact num...  · 3m</span></div>

<svg style="left:16px;top:449px" width="56" height="56"><use href="#grey"/></svg>
<div class="t it" style="top:458px"><span style="letter-spacing:-0.419px">Celia · 2 Beds 1 Bath Apartment ...</span></div>
<div class="t is" style="top:480px"><span style="letter-spacing:-0.300px">You: Yes, The Apartment Is Still Ava... · 3m</span></div>

<svg style="left:16px;top:521px" width="56" height="56"><use href="#room"/></svg>
<div class="t it" style="top:530px"><span style="letter-spacing:-0.452px">Celia · 2 Beds 1 Bath Apartment</span></div>
<div class="t is" style="top:552px"><span style="letter-spacing:-0.192px">Celia: I'm not a suspicious person b...  · 1h</span></div>

<svg style="left:16px;top:593px" width="56" height="56"><use href="#room"/></svg>
<div class="t it" style="top:602px"><span style="letter-spacing:-0.453px">Lakota · 2 Beds 1 Bath Apartm...</span></div>
<div class="t is" style="top:624px"><span style="letter-spacing:-0.069px">You: I'm waiting for your reply. ...  · 15h</span></div>
<svg style="left:313px;top:613px" width="16" height="16"><use href="#red"/></svg>

<svg style="left:16px;top:665px" width="56" height="56"><use href="#blue"/></svg>
<div class="t it" style="top:674px"><span style="letter-spacing:-0.535px">Stephen · 3 Beds 2 Baths House</span></div>
<div class="t is" style="top:696px"><span style="letter-spacing:-0.487px">Stephen: Okay · 16h</span></div>

<svg style="left:16px;top:737px" width="56" height="56"><use href="#carpet"/></svg>
<div class="t it" style="top:746px"><span style="letter-spacing:-0.464px">Keionna · 2 Beds 1 Bath Apartm...</span></div>
<div class="t is" style="top:768px"><span style="letter-spacing:-0.374px">Keionna: Like 2 or 3? · 18h</span></div>

<svg style="left:16px;top:809px" width="56" height="56"><use href="#dark"/></svg>
<div class="t it" style="top:818px"><span style="letter-spacing:-0.432px">Destiney · 2 Beds 1 Bath Apartm...</span></div>
<div class="t is" style="top:840px"><span style="letter-spacing:-0.360px">Destiney: 6809106793 · 19h</span></div>

<svg style="left:16px;top:881px" width="56" height="56"><use href="#kit"/></svg>
<div class="t it" style="top:890px"><span style="letter-spacing:-0.432px">Destiney · 2 Beds 1 Bath Apartm...</span></div>
<div class="t is" style="top:912px"><span style="letter-spacing:-0.438px">Destiney: Ok · 1d</span></div>

<svg style="left:16px;top:953px" width="56" height="56"><use href="#kit"/></svg>
<div class="t it" style="top:962px"><span style="letter-spacing:-0.506px">Jaeda · 2 Beds 1 Bath Apartment</span></div>
<div class="t is" style="top:984px"><span style="letter-spacing:-0.177px">You: Thanks. I am texting you from ... · 1d</span></div>
<!-- ======================= CHAT CARD ======================= -->
<div class="a card" id="chat"></div>
<svg style="left:392px;top:205px" width="40" height="40"><use href="#room"/></svg>
<div class="t" style="left:440px;top:219px;font-size:17px;font-weight:700;color:#e4e6eb"><span style="letter-spacing:-0.442px">Modesty · 2 Beds 1 Bath Apartment</span></div>
<div class="a" style="left:1351px;top:215px;width:20px;height:20px;border-radius:50%;background:#a100ff"></div>
<div class="a" style="left:1359.300px;top:218.700px;width:3.400px;height:3.400px;border-radius:50%;background:#1f2022"></div>
<div class="a" style="left:1359.700px;top:225.200px;width:2.700px;height:5.500px;background:#1f2022"></div>
<div class="a hl" style="left:376px;top:257px;width:1017px"></div>

<svg style="left:388px;top:270px" width="24" height="24"><use href="#room"/></svg>
<div class="t" style="left:424px;top:269px;font-size:12px;color:#b0b3b8"><span style="letter-spacing:0.057px">Marketplace</span></div>
<div class="t" style="left:424px;top:287px;font-size:13px;color:#e4e6eb"><span style="letter-spacing:-0.034px">$799 - 2 Beds 1 Bath Apartment</span></div>
<div class="a btn" style="left:388px;width:506px"><div class="t" style="left:196px"><span style="letter-spacing:-0.224px">Mark as pending</span></div></div>
<div class="a btn" style="left:898px;width:483px"><div class="t" style="left:195px"><span style="letter-spacing:-0.098px">More options</span></div></div>
<div class="a" style="left:376px;top:354px;width:1017px;height:1px;background:#505153"></div>

<!-- scrollbar -->
<div class="a" id="cscroll"></div>
<svg style="left:1379px;top:361px" width="9" height="6"><path d="M4.500 0L9 6H0Z" fill="#9b9b9b"/></svg>
<svg style="left:1379px;top:911px" width="9" height="6"><path d="M0 0H9L4.500 6Z" fill="#9b9b9b"/></svg>
<div class="a" id="cthumb"></div>

<!-- messages -->
<div class="t lbl" style="left:440px;top:372px"><span style="letter-spacing:0.234px">Modesty</span></div>
<div class="bub" style="left:428px;top:388px;width:157px;height:35px;border-radius:18px 18px 18px 5px"></div>
<div class="t bt" style="left:440px;top:398px"><span style="letter-spacing:-0.114px">Is this still available?</span></div>
<div class="bub" style="left:428px;top:425px;width:119px;height:44px;border-radius:5px 18px 18px 18px"></div>
<div class="t bt" style="left:440px;top:435px;font-weight:700"><span style="letter-spacing:-0.449px">Message sent</span></div>
<svg style="left:392px;top:441px" width="28" height="28"><use href="#person"/></svg>

<svg style="left:1210px;top:486.500px" width="13" height="12" viewBox="0 0 13 12"><path d="M5.800 0.300L0.400 5.200L5.800 10.100V7.300C8.600 7.300 10.800 8.400 12.600 11.400C12.300 6.800 10 3.600 5.800 3.100Z" fill="#b0b3b8"/></svg>
<div class="t lbl" style="left:1227px;top:487px"><span style="letter-spacing:0.107px">You replied to Modesty</span></div>
<div class="bub" style="left:1229px;top:505px;width:139px;height:48px;border-radius:18px;background:#3e3f41"></div>
<div class="t" style="left:1241px;top:515px;font-size:13px;color:#b8bbbf"><span style="letter-spacing:-0.146px">Is this still available?</span></div>
<div class="bub" style="left:780px;top:534px;width:588px;height:55px;border-radius:18px;background:#5538f6"></div>
<div class="t bt" style="left:792px;top:544px;color:#fff"><span style="letter-spacing:-0.154px">Yes, The Apartment Is Still Available. Please Send Your Phone Number. I'll connect</span></div>
<div class="t bt" style="left:792px;top:564px;color:#fff"><span style="letter-spacing:-0.062px">you Soon.</span></div>

<div class="t ts" style="left:817px;top:612px"><span style="letter-spacing:-0.438px">Feb 16, 2026, 11:54 AM</span></div>
<div class="bub" style="left:1318px;top:642px;width:50px;height:35px;background:#5037f5"></div>
<div class="t bt" style="left:1330px;top:652px;color:#fff"><span style="letter-spacing:-0.229px">Hey</span></div>
<div class="t ts" style="left:841px;top:700px"><span style="letter-spacing:-0.122px">Mon 9:54 PM</span></div>

<div class="t lbl" style="left:440px;top:737px"><span style="letter-spacing:0.234px">Modesty</span></div>
<div class="bub" style="left:428px;top:753px;width:105px;height:35px"></div>
<div class="t bt" style="left:440px;top:763px"><span style="letter-spacing:-0.244px">3154541538</span></div>
<svg style="left:392px;top:759px" width="28" height="28"><use href="#person"/></svg>
<svg style="left:1344px;top:798px" width="14" height="14"><use href="#person"/></svg>

<div class="t ts" style="left:855px;top:841px"><span style="letter-spacing:-0.225px">4:37 AM</span></div>
<div class="bub" style="left:1298px;top:871px;width:70px;height:35px;background:#0866ff"></div>
<div class="t bt" style="left:1310px;top:881px;color:#fff"><span style="letter-spacing:-0.534px">Thanks</span></div>
<div class="t lbl" style="left:1334px;top:909px"><span style="letter-spacing:-0.172px">Sent</span></div>

<!-- composer -->
<svg style="left:391px;top:943px" width="14" height="20" viewBox="0 0 14 20"><rect x="4" y="0.800" width="6.200" height="12.400" rx="3.100" fill="#0866ff"/><path d="M1.600 9V9.800A5.500 5.500 0 0 0 12.600 9.800V9M7.100 15.500V18.600M3.200 18.700H11" stroke="#0866ff" stroke-width="1.500" fill="none" stroke-linecap="round"/></svg>
<svg style="left:424px;top:943px" width="20" height="20" viewBox="0 0 20 20"><path d="M2.200 2.200C1.200 6 1.200 12 2.200 16" stroke="#0866ff" stroke-width="1.800" fill="none" stroke-linecap="round"/><rect x="4" y="0.800" width="15" height="18" rx="2.800" fill="#0866ff" transform="rotate(1.500 11.500 10)"/><path d="M6.300 3.400H17.200V11.700H6.300Z" fill="#242527"/><circle cx="9.200" cy="5.300" r="1.500" fill="#0866ff"/><path d="M6.300 11.900L8.600 9.600L11.400 12.200L15 8.200L17.200 10.100V12.500H6.300Z" fill="#0866ff"/></svg>
<svg style="left:460px;top:943px" width="20" height="20" viewBox="0 0 20 20"><path d="M2.600 3.600C6 1.500 13 0.400 16.800 1.300C19.300 4.500 18.800 10.500 16 14.500C13.500 17.800 9 19.600 6.200 18.700C3 16 1 8.500 2.600 3.600Z" fill="#0866ff"/><circle cx="6.900" cy="7.500" r="1.200" fill="#242527"/><circle cx="13.400" cy="6.300" r="1.200" fill="#242527"/><path d="M6.700 12L8.900 14.200" stroke="#242527" stroke-width="1.500" stroke-linecap="round"/><path d="M18.600 7C14 8.500 11.200 13 10.800 18.800" stroke="#242527" stroke-width="1.300" fill="none"/></svg>
<div class="a" style="left:497px;top:944.500px;width:18.500px;height:16.500px;border-radius:5px;background:#65676b"></div>
<div class="t" style="left:499px;top:947px;font-size:12px;font-weight:700;color:#1d1e20;transform:scaleX(.76);transform-origin:0 0">GIF</div>
<div class="a" style="left:533px;top:935px;width:816px;height:36px;border-radius:18px;background:#333334"></div>
<div class="t" style="left:544px;top:946px;font-size:15px;color:#b0b3b8"><span style="letter-spacing:-0.180px">Aa</span></div>
<svg style="left:1321px;top:943px" width="20" height="20" viewBox="0 0 20 20"><circle cx="10" cy="10" r="10" fill="#0866ff"/><circle cx="6.700" cy="7.800" r="1.400" fill="#333334"/><circle cx="13.300" cy="7.800" r="1.400" fill="#333334"/><path d="M5.500 11.800C7.500 15 12.500 15 14.500 11.800" stroke="#333334" stroke-width="1.600" fill="none" stroke-linecap="round"/></svg>
<svg style="left:1361px;top:943px" width="20" height="20" viewBox="0 0 20 20"><rect x="0" y="8" width="4" height="12" fill="#0866ff"/><path d="M6 19V9L10.500 0.800C12.500 0.500 13.800 2 13.300 3.800L12.300 7.500H18C19.500 7.500 20.300 8.800 19.800 10.200L17.500 17.500C17.200 18.500 16.300 19 15.300 19Z" fill="#0866ff"/></svg>

<!-- ======================= INFO PANEL ======================= -->
<div class="a card" id="info"></div>
<svg style="left:1613px;top:209px" width="72" height="72"><use href="#room"/></svg>
<div class="t" style="left:1513.500px;top:291px;font-size:17px;font-weight:700;color:#e4e6eb"><span style="letter-spacing:-0.442px">Modesty · 2 Beds 1 Bath Apartment</span></div>
<div class="a" style="left:1594px;top:338px;width:36px;height:36px;border-radius:50%;background:#3b3c3e"></div>
<svg style="left:1604px;top:347px" width="16" height="18" viewBox="0 0 18 20"><path d="M9 0C4.800 0 2.300 3 2.300 7V10.500L0.400 14.200C0.100 14.900 0.600 15.600 1.300 15.600H16.700C17.400 15.600 17.900 14.900 17.600 14.200L15.700 10.500V7C15.700 3 13.200 0 9 0Z" fill="#e4e6eb"/><path d="M5.800 17A3.300 3.300 0 0 0 12.200 17Z" fill="#e4e6eb"/></svg>
<div class="a" style="left:1666px;top:338px;width:36px;height:36px;border-radius:50%;background:#3b3c3e"></div>
<svg style="left:1676px;top:347px" width="18" height="18" viewBox="0 0 18 18"><circle cx="7" cy="7" r="5.600" stroke="#e4e6eb" stroke-width="2.200" fill="none"/><path d="M11.200 11.200L16.500 16.500" stroke="#e4e6eb" stroke-width="2.600" stroke-linecap="round"/></svg>
<div class="t" style="left:1596px;top:380px;font-size:13px;color:#e4e6eb"><span style="letter-spacing:0.523px">Mute</span></div>
<div class="t" style="left:1664px;top:380px;font-size:13px;color:#e4e6eb"><span style="letter-spacing:-0.367px">Search</span></div>

<div class="t row" style="top:427px"><span style="letter-spacing:-0.519px">Customize chat</span></div>
<div class="t row" style="top:471px"><span style="letter-spacing:-0.434px">Chat members</span></div>
<div class="t row" style="top:515px"><span style="letter-spacing:-0.320px">Media, files and links</span></div>
<div class="t row" style="top:559px"><span style="letter-spacing:-0.493px">Privacy &amp; support</span></div>
<svg style="left:1860px;top:432px" width="10" height="7" viewBox="0 0 10 7"><path d="M1 1L5 5.200L9 1" stroke="#e4e6eb" stroke-width="1.800" fill="none" stroke-linecap="round" stroke-linejoin="round"/></svg>
<svg style="left:1860px;top:476px" width="10" height="7" viewBox="0 0 10 7"><path d="M1 1L5 5.200L9 1" stroke="#e4e6eb" stroke-width="1.800" fill="none" stroke-linecap="round" stroke-linejoin="round"/></svg>
<svg style="left:1860px;top:520px" width="10" height="7" viewBox="0 0 10 7"><path d="M1 1L5 5.200L9 1" stroke="#e4e6eb" stroke-width="1.800" fill="none" stroke-linecap="round" stroke-linejoin="round"/></svg>
<svg style="left:1860px;top:564px" width="10" height="7" viewBox="0 0 10 7"><path d="M1 1L5 5.200L9 1" stroke="#e4e6eb" stroke-width="1.800" fill="none" stroke-linecap="round" stroke-linejoin="round"/></svg>
<!-- ======================= TASKBAR ======================= -->
<div class="a" id="task"></div>
<!-- start + search -->
<svg style="left:16px;top:1032px" width="16" height="16" viewBox="0 0 17 17"><path d="M0 2.400L7 1.400V8H0ZM8 1.250L17 0V8H8ZM0 9H7V15.600L0 14.600ZM8 9H17V17L8 15.750Z" fill="#fff"/></svg>
<svg style="left:61px;top:1028px" width="23" height="23" viewBox="0 0 23 23"><circle cx="14" cy="9" r="6.800" stroke="#fff" stroke-width="2" fill="none"/><path d="M9 14L1 22" stroke="#fff" stroke-width="2.400"/></svg>
<!-- firefox -->
<svg style="left:111px;top:1007px" width="24" height="24" viewBox="0 0 24 24"><defs><linearGradient id="ffg" x1="0" y1="0" x2="0" y2="1"><stop offset="0" stop-color="#ffbd2e"/><stop offset=".45" stop-color="#ff7a1a"/><stop offset="1" stop-color="#ee1b7a"/></linearGradient></defs><path d="M12 3C14 1.500 14.500 0.500 14.800 0C17 2 18 4 17.800 5.500C20.500 7 23.200 10.500 22.800 14.500C22.300 20 17.500 23.500 12 23.500S1 19.500 1 13.500C1 10.500 2 8 3.500 6.500C3.500 8 4 8.800 4.800 9.300C5.500 6 8.500 3.500 12 3Z" fill="url(#ffg)"/><circle cx="11.500" cy="12.500" r="5.200" fill="#7a3fe0"/><path d="M4.800 9.300C7 8 10 8 12 9.500C9.500 9.800 8.500 11 8.800 12.500C7 12.500 5.500 11.500 4.800 9.300Z" fill="#ff8a1f"/><path d="M15 2C16.500 3.500 17.500 5 17.800 5.500C17.500 4 17 2 14.800 0Z" fill="#ffe14a"/></svg>
<!-- explorer -->
<svg style="left:160px;top:1010px" width="24" height="20" viewBox="0 0 24 20"><path d="M1 2H9L11 4H23V18H1Z" fill="#f2b81f"/><path d="M1 6H23V18H1Z" fill="#ffd968"/><path d="M5 12H19V18H5Z" fill="#3c8fe0"/><path d="M9 15H15V18H9Z" fill="#ffd968"/></svg>
<svg style="left:209px;top:1007px" width="27" height="27" viewBox="0 0 27 27"><circle cx="12" cy="12" r="12" fill="#e8453c"/><path d="M12 12L1.600 18A12 12 0 0 0 12 24L18 13.500Z" fill="#34a853"/><path d="M12 12H24A12 12 0 0 1 12 24L18 13.500Z" fill="#fbbc04"/><path d="M1.600 6A12 12 0 0 0 6 22.400L12 12Z" fill="#34a853"/><circle cx="12" cy="12" r="5.500" fill="#fff"/><circle cx="12" cy="12" r="4.300" fill="#4285f4"/><circle cx="18.500" cy="18.500" r="7.600" fill="#c8693a"/><circle cx="18.500" cy="18.500" r="5.400" fill="none" stroke="#5aa0f0" stroke-width="1.300"/><circle cx="18.500" cy="17" r="1.800" fill="#f09a5a"/><path d="M15 22C16 19.400 21 19.400 22 22Z" fill="#f09a5a"/></svg>
<svg style="left:258px;top:1007px" width="27" height="27" viewBox="0 0 27 27"><circle cx="12" cy="12" r="12" fill="#e8453c"/><path d="M12 12L1.600 18A12 12 0 0 0 12 24L18 13.500Z" fill="#34a853"/><path d="M12 12H24A12 12 0 0 1 12 24L18 13.500Z" fill="#fbbc04"/><path d="M1.600 6A12 12 0 0 0 6 22.400L12 12Z" fill="#34a853"/><circle cx="12" cy="12" r="5.500" fill="#fff"/><circle cx="12" cy="12" r="4.300" fill="#4285f4"/><circle cx="18.500" cy="18.500" r="7.600" fill="#1b2030"/><circle cx="18.500" cy="18.500" r="5.400" fill="none" stroke="#c9d4f0" stroke-width="1.300"/><circle cx="18.500" cy="17" r="1.800" fill="#c9d4f0"/><path d="M15 22C16 19.400 21 19.400 22 22Z" fill="#c9d4f0"/></svg>
<svg style="left:356px;top:1007px" width="27" height="27" viewBox="0 0 27 27"><circle cx="12" cy="12" r="12" fill="#e8453c"/><path d="M12 12L1.600 18A12 12 0 0 0 12 24L18 13.500Z" fill="#34a853"/><path d="M12 12H24A12 12 0 0 1 12 24L18 13.500Z" fill="#fbbc04"/><path d="M1.600 6A12 12 0 0 0 6 22.400L12 12Z" fill="#34a853"/><circle cx="12" cy="12" r="5.500" fill="#fff"/><circle cx="12" cy="12" r="4.300" fill="#4285f4"/><circle cx="18.500" cy="18.500" r="7.600" fill="#1b2030"/><circle cx="18.500" cy="18.500" r="5.400" fill="none" stroke="#c9d4f0" stroke-width="1.300"/><circle cx="18.500" cy="17" r="1.800" fill="#c9d4f0"/><path d="M15 22C16 19.400 21 19.400 22 22Z" fill="#c9d4f0"/></svg>
<svg style="left:405px;top:1007px" width="27" height="27" viewBox="0 0 27 27"><circle cx="12" cy="12" r="12" fill="#e8453c"/><path d="M12 12L1.600 18A12 12 0 0 0 12 24L18 13.500Z" fill="#34a853"/><path d="M12 12H24A12 12 0 0 1 12 24L18 13.500Z" fill="#fbbc04"/><path d="M1.600 6A12 12 0 0 0 6 22.400L12 12Z" fill="#34a853"/><circle cx="12" cy="12" r="5.500" fill="#fff"/><circle cx="12" cy="12" r="4.300" fill="#4285f4"/><circle cx="18.500" cy="18.500" r="7.600" fill="#2a1e1e"/><circle cx="18.500" cy="18.500" r="5.400" fill="none" stroke="#f0c4b4" stroke-width="1.300"/><circle cx="18.500" cy="17" r="1.800" fill="#f0c4b4"/><path d="M15 22C16 19.400 21 19.400 22 22Z" fill="#f0c4b4"/></svg>
<svg style="left:454px;top:1007px" width="27" height="27" viewBox="0 0 27 27"><circle cx="12" cy="12" r="12" fill="#e8453c"/><path d="M12 12L1.600 18A12 12 0 0 0 12 24L18 13.500Z" fill="#34a853"/><path d="M12 12H24A12 12 0 0 1 12 24L18 13.500Z" fill="#fbbc04"/><path d="M1.600 6A12 12 0 0 0 6 22.400L12 12Z" fill="#34a853"/><circle cx="12" cy="12" r="5.500" fill="#fff"/><circle cx="12" cy="12" r="4.300" fill="#4285f4"/><circle cx="18.500" cy="18.500" r="7.600" fill="#2a1e1e"/><circle cx="18.500" cy="18.500" r="5.400" fill="none" stroke="#f0c4b4" stroke-width="1.300"/><circle cx="18.500" cy="17" r="1.800" fill="#f0c4b4"/><path d="M15 22C16 19.400 21 19.400 22 22Z" fill="#f0c4b4"/></svg>
<svg style="left:503px;top:1007px" width="27" height="27" viewBox="0 0 27 27"><circle cx="12" cy="12" r="12" fill="#e8453c"/><path d="M12 12L1.600 18A12 12 0 0 0 12 24L18 13.500Z" fill="#34a853"/><path d="M12 12H24A12 12 0 0 1 12 24L18 13.500Z" fill="#fbbc04"/><path d="M1.600 6A12 12 0 0 0 6 22.400L12 12Z" fill="#34a853"/><circle cx="12" cy="12" r="5.500" fill="#fff"/><circle cx="12" cy="12" r="4.300" fill="#4285f4"/><circle cx="18.500" cy="18.500" r="7.600" fill="#c8281e"/><circle cx="18.500" cy="18.500" r="5.400" fill="none" stroke="#e03a2a" stroke-width="1.300"/><circle cx="18.500" cy="17" r="1.800" fill="#f5b53a"/><path d="M15 22C16 19.400 21 19.400 22 22Z" fill="#f5b53a"/></svg>
<svg style="left:552px;top:1007px" width="27" height="27" viewBox="0 0 27 27"><circle cx="12" cy="12" r="12" fill="#e8453c"/><path d="M12 12L1.600 18A12 12 0 0 0 12 24L18 13.500Z" fill="#34a853"/><path d="M12 12H24A12 12 0 0 1 12 24L18 13.500Z" fill="#fbbc04"/><path d="M1.600 6A12 12 0 0 0 6 22.400L12 12Z" fill="#34a853"/><circle cx="12" cy="12" r="5.500" fill="#fff"/><circle cx="12" cy="12" r="4.300" fill="#4285f4"/><circle cx="18.500" cy="18.500" r="7.600" fill="#182224"/><circle cx="18.500" cy="18.500" r="5.400" fill="none" stroke="#a8d8d2" stroke-width="1.300"/><circle cx="18.500" cy="17" r="1.800" fill="#a8d8d2"/><path d="M15 22C16 19.400 21 19.400 22 22Z" fill="#a8d8d2"/></svg>
<svg style="left:306px;top:1007px" width="26" height="24" viewBox="0 0 26 24"><defs><linearGradient id="np" x1="0" y1="1" x2="1" y2="0"><stop offset="0" stop-color="#3f93ad"/><stop offset=".5" stop-color="#a9d9e6"/><stop offset="1" stop-color="#e3f4f8"/></linearGradient></defs><path d="M10 2.500L22.500 4L24 20L21 22L19 6Z" fill="#d9d3b4"/><path d="M9 1.500L21.500 3L18.500 20.500L1 18Z" fill="url(#np)"/><path d="M9 1.500L21.500 3L21.200 4.600L8.500 3Z" fill="#dfe9ec"/><path d="M1 18L18.500 20.500L19 22L2 19.500Z" fill="#f1eedd"/></svg>
<div class="a ul" style="left:152px"></div>
<div class="a ul" style="left:201px"></div>
<div class="a ul" style="left:250px"></div>
<div class="a ul" style="left:299px"></div>
<div class="a ul" style="left:348px"></div>
<div class="a ul" style="left:397px"></div>
<div class="a ul" style="left:446px"></div>
<div class="a ul" style="left:495px"></div>
<div class="a ul" style="left:544px"></div>
<!-- network meter -->
<div class="a" style="left:1499px;top:1000px;width:62px;height:38.500px;background:#b8d3d3"></div>
<div class="a" style="left:1499px;top:1040px;width:62px;height:36px;background:#b8d3d3"></div>
<svg style="left:1501px;top:1014px" width="9" height="11" viewBox="0 0 9 11"><path d="M3 0H6V4.500H9L4.500 9L0 4.500H3Z" fill="#e0614e"/><path d="M0 10.300H9" stroke="#8c9a9a" stroke-width="1"/></svg>
<div class="t" style="left:1513px;top:1014px;font-size:12.5px;color:#98282a"><span style="letter-spacing:-1.053px">7.3 Mbps</span></div>
<div class="t" style="left:1503px;top:1054px;font-size:12.5px;color:#216a2c"><span style="letter-spacing:-0.917px">269.1 kbps</span></div>
<!-- weather -->
<svg style="left:1586px;top:1027px" width="27" height="26" viewBox="0 0 27 26"><path d="M10 2A7 7 0 1 0 17 12A6 6 0 0 1 10 2Z" fill="#f5b325"/><path d="M6 24H21A5 5 0 0 0 21 14A6.500 6.500 0 0 0 9 13A5.500 5.500 0 0 0 6 24Z" fill="#8fb7f0"/><path d="M6 24H21A5 5 0 0 0 24.500 22C20 23 8 23 3 21.500A5.500 5.500 0 0 0 6 24Z" fill="#5f8fe0"/><circle cx="19" cy="6" r="5.300" fill="#d9272b"/></svg>
<div class="t" style="left:1602.500px;top:1028px;font-size:9px;font-weight:700;color:#fff">1</div>
<div class="t" style="left:1620px;top:1033px;font-size:14px;color:#fff"><span style="letter-spacing:-0.293px">-4°C</span></div>
<svg style="left:1671px;top:1035px" width="13" height="8" viewBox="0 0 13 8"><path d="M0.800 7.200L6.500 1.200L12.200 7.200" stroke="#fff" stroke-width="1.300" fill="none"/></svg>
<!-- tray icons -->
<div class="a" style="left:1691px;top:1000px;width:22px;height:38px;background:#3c3a42"></div>
<svg style="left:1694px;top:1010px" width="16" height="18" viewBox="0 0 16 18"><path d="M1 17C3 9 8 3 15 1C14 8 9 13 3 15Z" fill="#a45ee0"/><path d="M1 17C4 10 9 5 15 1" stroke="#d9b6f5" stroke-width="1" fill="none"/></svg>
<svg style="left:1717px;top:1013px" width="18" height="12" viewBox="0 0 18 12"><path d="M4 11.500H14.500A3.200 3.200 0 0 0 14.500 5A5 5 0 0 0 5 4.500A3.600 3.600 0 0 0 4 11.500Z" fill="#d8d8dc"/><path d="M2 10C6 7 12 6 17 8" stroke="#8e8e96" stroke-width="1.200" fill="none"/></svg>
<svg style="left:1744px;top:1011px" width="13" height="17" viewBox="0 0 13 17"><rect x="1" y="4.500" width="8" height="8" rx="1.500" stroke="#fff" stroke-width="1.200" fill="none"/><path d="M9 7.500L12 5.500V11.500L9 9.500M2.500 2.500C3 0.800 8 0.800 8.500 2.500M2.500 14.500C3 16.200 8 16.200 8.500 14.500" stroke="#fff" stroke-width="1.100" fill="none"/></svg>
<svg style="left:1694px;top:1051px" width="17" height="16" viewBox="0 0 17 16"><path d="M1 2L15 0.500V13.500L1 12Z" stroke="#fff" stroke-width="1.200" fill="none"/><path d="M5 5H10V8H6V10H11" stroke="#fff" stroke-width="1.100" fill="none"/><circle cx="13" cy="13" r="3" fill="#2f7de0"/></svg>
<svg style="left:1718px;top:1052px" width="17" height="15" viewBox="0 0 17 15"><path d="M4 1.500H16V10.500H4Z" stroke="#fff" stroke-width="1.200" fill="none"/><path d="M1 1V6H4M10 10.500V14M6 14H14" stroke="#fff" stroke-width="1.200" fill="none"/></svg>
<svg style="left:1742px;top:1051px" width="18" height="15" viewBox="0 0 18 15"><path d="M1 5H4L8 1.500V13.500L4 10H1Z" stroke="#fff" stroke-width="1.200" fill="none" stroke-linejoin="round"/><path d="M10.500 5A3.500 3.500 0 0 1 10.500 10M12.500 3A6 6 0 0 1 12.500 12M14.800 1A9 9 0 0 1 14.800 14" stroke="#fff" stroke-width="1.100" fill="none"/></svg>
<svg style="left:1769px;top:1030px" width="19" height="18" viewBox="0 0 19 18"><path d="M6 15L14 2C15.500 0 18.500 2 17 4.500L9 17M3 14C0 15 1 18 4 16.500C6 15.500 5 13 3 14Z" stroke="#fff" stroke-width="1.300" fill="none"/><path d="M9 8L13 10.500" stroke="#fff" stroke-width="1.200"/></svg>
<!-- clock -->
<div class="t clk" style="left:1808px;top:1012px"><span style="letter-spacing:-0.004px">4:38 AM</span></div>
<div class="t clk" style="left:1809px;top:1034px"><span style="letter-spacing:-0.371px">Tuesday</span></div>
<div class="t clk" style="left:1803px;top:1056px"><span style="letter-spacing:0.068px">2/24/2026</span></div>
<!-- action center -->
<svg style="left:1879px;top:1031px" width="17" height="16" viewBox="0 0 17 16"><path d="M0 0H17V12H13V16L9 12H0Z" fill="#fff"/><path d="M3 3H14M3 6H14M3 9H14" stroke="#1b1a1d" stroke-width="1"/></svg>
<div class="a" style="left:1886px;top:1038px;width:17px;height:17px;border-radius:50%;background:#242226;border:1.500px solid #9b9b9f"></div>
<div class="t" style="left:1891.500px;top:1041px;font-size:12px;color:#fff">1</div>
</body>
</html>
